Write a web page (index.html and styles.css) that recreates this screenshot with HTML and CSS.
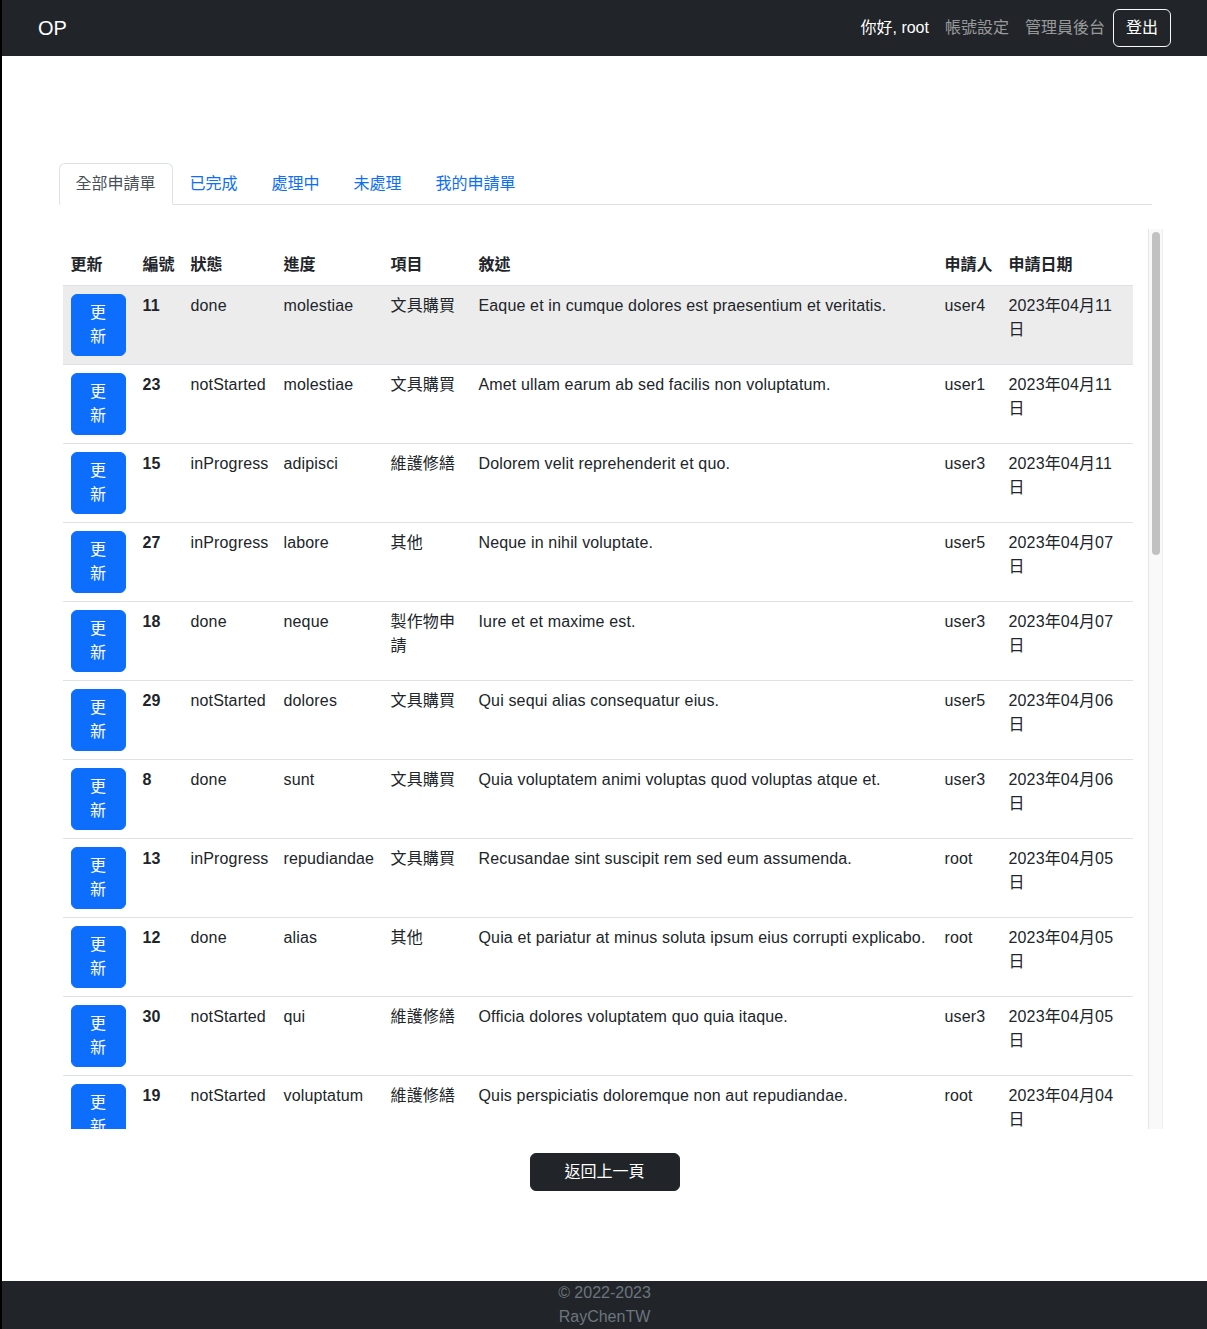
FILE: index.html
```html
<!DOCTYPE html>
<html lang="zh-Hant">
<head>
<meta charset="utf-8">
<title>申請單</title>
<link rel="stylesheet" href="styles.css">
</head>
<body>
<nav class="navbar">
  <a class="brand" href="#">OP</a>
  <div class="nav-right">
    <span class="nav-link hello">你好, root</span>
    <a class="nav-link" href="#">帳號設定</a>
    <a class="nav-link" href="#">管理員後台</a>
    <button class="btn-logout">登出</button>
  </div>
</nav>
<main class="container">
  <ul class="tabs">
    <li><a class="tab active" href="#">全部申請單</a></li>
    <li><a class="tab" href="#">已完成</a></li>
    <li><a class="tab" href="#">處理中</a></li>
    <li><a class="tab" href="#">未處理</a></li>
    <li><a class="tab" href="#">我的申請單</a></li>
  </ul>
  <div class="scroll-box">
    <div class="scroll-content">
    <table class="table">
      <colgroup>
        <col class="c-upd"><col class="c-id"><col class="c-status"><col class="c-prog"><col class="c-item"><col class="c-desc"><col class="c-user"><col class="c-date">
      </colgroup>
      <thead>
        <tr><th>更新</th><th>編號</th><th>狀態</th><th>進度</th><th>項目</th><th>敘述</th><th>申請人</th><th>申請日期</th></tr>
      </thead>
      <tbody>
        <tr class="hover"><td><button class="btn-upd">更新</button></td><th>11</th><td>done</td><td>molestiae</td><td>文具購買</td><td>Eaque et in cumque dolores est praesentium et veritatis.</td><td>user4</td><td>2023年04月11日</td></tr>
        <tr><td><button class="btn-upd">更新</button></td><th>23</th><td>notStarted</td><td>molestiae</td><td>文具購買</td><td>Amet ullam earum ab sed facilis non voluptatum.</td><td>user1</td><td>2023年04月11日</td></tr>
        <tr><td><button class="btn-upd">更新</button></td><th>15</th><td>inProgress</td><td>adipisci</td><td>維護修繕</td><td>Dolorem velit reprehenderit et quo.</td><td>user3</td><td>2023年04月11日</td></tr>
        <tr><td><button class="btn-upd">更新</button></td><th>27</th><td>inProgress</td><td>labore</td><td>其他</td><td>Neque in nihil voluptate.</td><td>user5</td><td>2023年04月07日</td></tr>
        <tr><td><button class="btn-upd">更新</button></td><th>18</th><td>done</td><td>neque</td><td>製作物申請</td><td>Iure et et maxime est.</td><td>user3</td><td>2023年04月07日</td></tr>
        <tr><td><button class="btn-upd">更新</button></td><th>29</th><td>notStarted</td><td>dolores</td><td>文具購買</td><td>Qui sequi alias consequatur eius.</td><td>user5</td><td>2023年04月06日</td></tr>
        <tr><td><button class="btn-upd">更新</button></td><th>8</th><td>done</td><td>sunt</td><td>文具購買</td><td>Quia voluptatem animi voluptas quod voluptas atque et.</td><td>user3</td><td>2023年04月06日</td></tr>
        <tr><td><button class="btn-upd">更新</button></td><th>13</th><td>inProgress</td><td>repudiandae</td><td>文具購買</td><td>Recusandae sint suscipit rem sed eum assumenda.</td><td>root</td><td>2023年04月05日</td></tr>
        <tr><td><button class="btn-upd">更新</button></td><th>12</th><td>done</td><td>alias</td><td>其他</td><td>Quia et pariatur at minus soluta ipsum eius corrupti explicabo.</td><td>root</td><td>2023年04月05日</td></tr>
        <tr><td><button class="btn-upd">更新</button></td><th>30</th><td>notStarted</td><td>qui</td><td>維護修繕</td><td>Officia dolores voluptatem quo quia itaque.</td><td>user3</td><td>2023年04月05日</td></tr>
        <tr><td><button class="btn-upd">更新</button></td><th>19</th><td>notStarted</td><td>voluptatum</td><td>維護修繕</td><td>Quis perspiciatis doloremque non aut repudiandae.</td><td>root</td><td>2023年04月04日</td></tr>
        <tr><td><button class="btn-upd">更新</button></td><th>22</th><td>done</td><td>velit</td><td>其他</td><td>Aut quia et dolorem sit.</td><td>user2</td><td>2023年04月04日</td></tr>
        <tr><td><button class="btn-upd">更新</button></td><th>5</th><td>inProgress</td><td>omnis</td><td>文具購買</td><td>Ut est quos voluptas ut.</td><td>user1</td><td>2023年04月03日</td></tr>
        <tr><td><button class="btn-upd">更新</button></td><th>26</th><td>notStarted</td><td>et</td><td>維護修繕</td><td>Sit aut non soluta quia.</td><td>user4</td><td>2023年04月03日</td></tr>
        <tr><td><button class="btn-upd">更新</button></td><th>2</th><td>done</td><td>rerum</td><td>其他</td><td>Nihil rerum ut et et.</td><td>root</td><td>2023年04月02日</td></tr>
        <tr><td><button class="btn-upd">更新</button></td><th>17</th><td>inProgress</td><td>illum</td><td>文具購買</td><td>Velit sed ea aut aut.</td><td>user2</td><td>2023年04月02日</td></tr>
        <tr><td><button class="btn-upd">更新</button></td><th>9</th><td>notStarted</td><td>quia</td><td>維護修繕</td><td>Est vel dolores et.</td><td>user5</td><td>2023年04月01日</td></tr>
        <tr><td><button class="btn-upd">更新</button></td><th>24</th><td>done</td><td>sed</td><td>其他</td><td>Odio quos et iure.</td><td>user3</td><td>2023年03月31日</td></tr>
        <tr><td><button class="btn-upd">更新</button></td><th>14</th><td>inProgress</td><td>ut</td><td>文具購買</td><td>Amet et ut eum.</td><td>user1</td><td>2023年03月31日</td></tr>
        <tr><td><button class="btn-upd">更新</button></td><th>3</th><td>notStarted</td><td>aut</td><td>維護修繕</td><td>Ea nam ipsa hic.</td><td>root</td><td>2023年03月30日</td></tr>
        <tr><td><button class="btn-upd">更新</button></td><th>28</th><td>done</td><td>esse</td><td>其他</td><td>Quae natus et sit.</td><td>user4</td><td>2023年03月29日</td></tr>
        <tr><td><button class="btn-upd">更新</button></td><th>10</th><td>inProgress</td><td>vel</td><td>文具購買</td><td>In et ut et.</td><td>user2</td><td>2023年03月29日</td></tr>
        <tr><td><button class="btn-upd">更新</button></td><th>21</th><td>notStarted</td><td>eos</td><td>維護修繕</td><td>Ad quo et ab.</td><td>user5</td><td>2023年03月28日</td></tr>
        <tr><td><button class="btn-upd">更新</button></td><th>6</th><td>done</td><td>nam</td><td>其他</td><td>Eum et sit illo.</td><td>user3</td><td>2023年03月27日</td></tr>
        <tr><td><button class="btn-upd">更新</button></td><th>16</th><td>inProgress</td><td>hic</td><td>文具購買</td><td>Non quia est.</td><td>user1</td><td>2023年03月27日</td></tr>
        <tr><td><button class="btn-upd">更新</button></td><th>1</th><td>notStarted</td><td>odit</td><td>維護修繕</td><td>Et sint nisi.</td><td>root</td><td>2023年03月26日</td></tr>
        <tr><td><button class="btn-upd">更新</button></td><th>25</th><td>done</td><td>nisi</td><td>其他</td><td>Qui rem est.</td><td>user4</td><td>2023年03月25日</td></tr>
        <tr><td><button class="btn-upd">更新</button></td><th>7</th><td>inProgress</td><td>amet</td><td>文具購買</td><td>Ut sed ut.</td><td>user2</td><td>2023年03月25日</td></tr>
        <tr><td><button class="btn-upd">更新</button></td><th>20</th><td>notStarted</td><td>enim</td><td>維護修繕</td><td>Id eos ea.</td><td>user5</td><td>2023年03月24日</td></tr>
        <tr><td><button class="btn-upd">更新</button></td><th>4</th><td>done</td><td>iste</td><td>其他</td><td>Sit et qui.</td><td>user3</td><td>2023年03月23日</td></tr>
      </tbody>
    </table>
    </div>
    <div class="scrollbar"><div class="thumb"></div></div>
  </div>
  <div class="back-wrap"><button class="btn-back">返回上一頁</button></div>
</main>
<footer class="footer">
  <div>© 2022-2023</div>
  <div>RayChenTW</div>
</footer>
</body>
</html>
```
FILE: styles.css
```css
* { box-sizing: border-box; }
html, body { margin: 0; padding: 0; }
body {
  border-left: 2px solid #000;
  font-family: "Liberation Sans", "Noto Sans CJK TC", sans-serif;
  font-size: 16px;
  line-height: 24px;
  color: #212529;
  background: #fff;
  min-height: 1329px;
}
.navbar {
  height: 56px;
  background: #212529;
  display: flex;
  align-items: center;
  justify-content: space-between;
  padding: 0 36px 0 36px;
}
.brand {
  color: #fff;
  font-size: 20px;
  text-decoration: none;
  line-height: 30px;
}
.nav-right { display: flex; align-items: center; }
.nav-link {
  padding: 8px 8px;
  color: rgba(255,255,255,.55);
  text-decoration: none;
}
.nav-link.hello { color: #fff; }
.btn-logout {
  font-family: inherit;
  font-size: 16px;
  line-height: 24px;
  color: #fff;
  background: transparent;
  border: 1px solid #f8f9fa;
  border-radius: 6px;
  padding: 6px 12px;
}
.container {
  max-width: 1140px;
  margin: 0 auto;
  padding: 0 12px;
}
.tabs {
  list-style: none;
  display: flex;
  margin: 107px 11px 0 12px;
  padding: 0;
  border-bottom: 1px solid #dee2e6;
}
.tab {
  display: block;
  padding: 8px 16px;
  border: 1px solid transparent;
  border-radius: 6px 6px 0 0;
  margin-bottom: -1px;
  color: #0d6efd;
  text-decoration: none;
}
.tab.active {
  color: #495057;
  background: #fff;
  border-color: #dee2e6 #dee2e6 #fff;
}
.scroll-box {
  margin-top: 24px;
  height: 900px;
  display: flex;
}
.scroll-content {
  flex: 1;
  overflow: hidden;
  padding: 16px 16px 0 16px;
}
.scrollbar {
  width: 15px;
  flex: none;
  background: #f9f9f9;
  border-left: 1px solid #e6e6e6;
  border-right: 1px solid #efefef;
  padding: 3px 2px 0 3px;
}
.thumb {
  height: 323px;
  background: #c1c1c1;
  border-radius: 4px;
}
.table {
  width: 1070px;
  table-layout: fixed;
  border-collapse: collapse;
}
.c-upd { width: 72px; }
.c-id { width: 48px; }
.c-status { width: 93px; }
.c-prog { width: 107px; }
.c-item { width: 88px; }
.c-desc { width: 466px; }
.c-user { width: 64px; }
.c-date { width: 132px; }
.table th, .table td {
  padding: 8px;
  text-align: left;
  vertical-align: top;
  border-bottom: 1px solid #dee2e6;
  letter-spacing: 0.15px;
}
.table thead th { font-weight: 700; letter-spacing: 0; }
.table tbody th { font-weight: 700; }
.table tr.hover > * { background: #ececec; }
.btn-upd {
  display: block;
  width: 55px;
  font-family: inherit;
  font-size: 16px;
  line-height: 24px;
  color: #fff;
  background: #0d6efd;
  border: 1px solid #0d6efd;
  border-radius: 6px;
  padding: 6px 12px;
  text-align: center;
}
.back-wrap {
  display: flex;
  justify-content: center;
  margin-top: 24px;
}
.btn-back {
  width: 150px;
  height: 38px;
  font-family: inherit;
  font-size: 16px;
  line-height: 24px;
  color: #fff;
  background: #212529;
  border: 1px solid #212529;
  border-radius: 6px;
  padding: 6px 12px;
}
.footer {
  margin-top: 90px;
  background: #212529;
  color: #6c757d;
  text-align: center;
  line-height: 24px;
}
```
